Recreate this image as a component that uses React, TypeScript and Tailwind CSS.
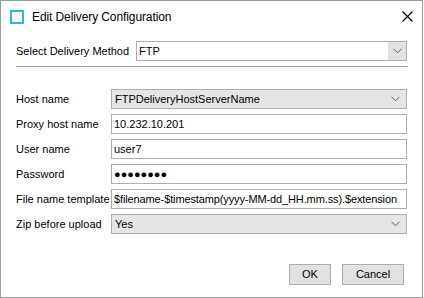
const Chevron = () => (
  <svg width="9" height="6" viewBox="0 0 9 6" className="block">
    <path d="M0.5 0.8 L4.5 4.8 L8.5 0.8" fill="none" stroke="#606060" strokeWidth="1" />
  </svg>
);

const Row = ({ label, children }: { label: string; children: React.ReactNode }) => (
  <div className="flex h-[20px] items-center">
    <div className="w-[95px] shrink-0 text-[11px] leading-none whitespace-nowrap">{label}</div>
    <div className="h-full w-[297px]">{children}</div>
  </div>
);

const TextBox = ({ value, tight }: { value: string; tight?: boolean }) => (
  <div
    className={`flex h-full items-center overflow-hidden border border-[#adadad] bg-white pl-[2px] text-[11px] whitespace-nowrap ${
      tight ? 'tracking-[-0.12px]' : ''
    }`}
  >
    {value}
  </div>
);

const DropBox = ({ value }: { value: string }) => (
  <div className="flex h-full items-center justify-between border border-[#adadad] bg-[#e5e5e5] pl-[3px] pr-[6px] text-[11px]">
    <span>{value}</span>
    <Chevron />
  </div>
);

export default function App() {
  return (
    <div
      className="h-[298px] w-[423px] border border-[#9c9c9c] bg-white text-black"
      style={{ fontFamily: '"Liberation Sans", Arial, sans-serif' }}
    >
      {/* title bar */}
      <div className="flex h-[31px] items-center pl-[9px] pr-[8px]">
        <div className="h-[14px] w-[14px] border-2 border-[#2bbcd2]" />
        <div className="ml-[8px] text-[12px] tracking-[-0.1px]">Edit Delivery Configuration</div>
        <svg width="11" height="11" viewBox="0 0 11 11" className="ml-auto mr-[1px]">
          <path d="M0.5 0.5 L10.5 10.5 M10.5 0.5 L0.5 10.5" stroke="#000" strokeWidth="1.1" />
        </svg>
      </div>

      <div className="px-[15px] pt-[9px]">
        <div className="flex h-[20px] items-center">
          <div className="w-[120px] shrink-0 text-[11px] leading-none whitespace-nowrap">Select Delivery Method</div>
          <div className="flex h-full w-[272px] border border-[#adadad] bg-white">
            <div className="flex flex-1 items-center pl-[2px] text-[11px]">FTP</div>
            <div className="flex w-[18px] items-center justify-center bg-[#e1e1e1]">
              <Chevron />
            </div>
          </div>
        </div>

        <div className="mt-[5px] h-px w-[392px] bg-[#a0a0a0]" />

        <div className="mt-[22px] flex flex-col gap-[5px]">
          <Row label="Host name">
            <DropBox value="FTPDeliveryHostServerName" />
          </Row>
          <Row label="Proxy host name">
            <TextBox value="10.232.10.201" />
          </Row>
          <Row label="User name">
            <TextBox value="user7" />
          </Row>
          <Row label="Password">
            <TextBox value="●●●●●●●●" />
          </Row>
          <Row label="File name template">
            <TextBox value="$filename-$timestamp(yyyy-MM-dd_HH.mm.ss).$extension" tight />
          </Row>
          <Row label="Zip before upload">
            <DropBox value="Yes" />
          </Row>
        </div>

        <div className="mt-[30px] flex justify-end gap-[11px] pr-[3px]">
          <button className="h-[21px] w-[42px] border border-[#adadad] bg-[#e1e1e1] text-[11px]">OK</button>
          <button className="h-[21px] w-[62px] border border-[#adadad] bg-[#e1e1e1] text-[11px]">Cancel</button>
        </div>
      </div>
    </div>
  );
}
